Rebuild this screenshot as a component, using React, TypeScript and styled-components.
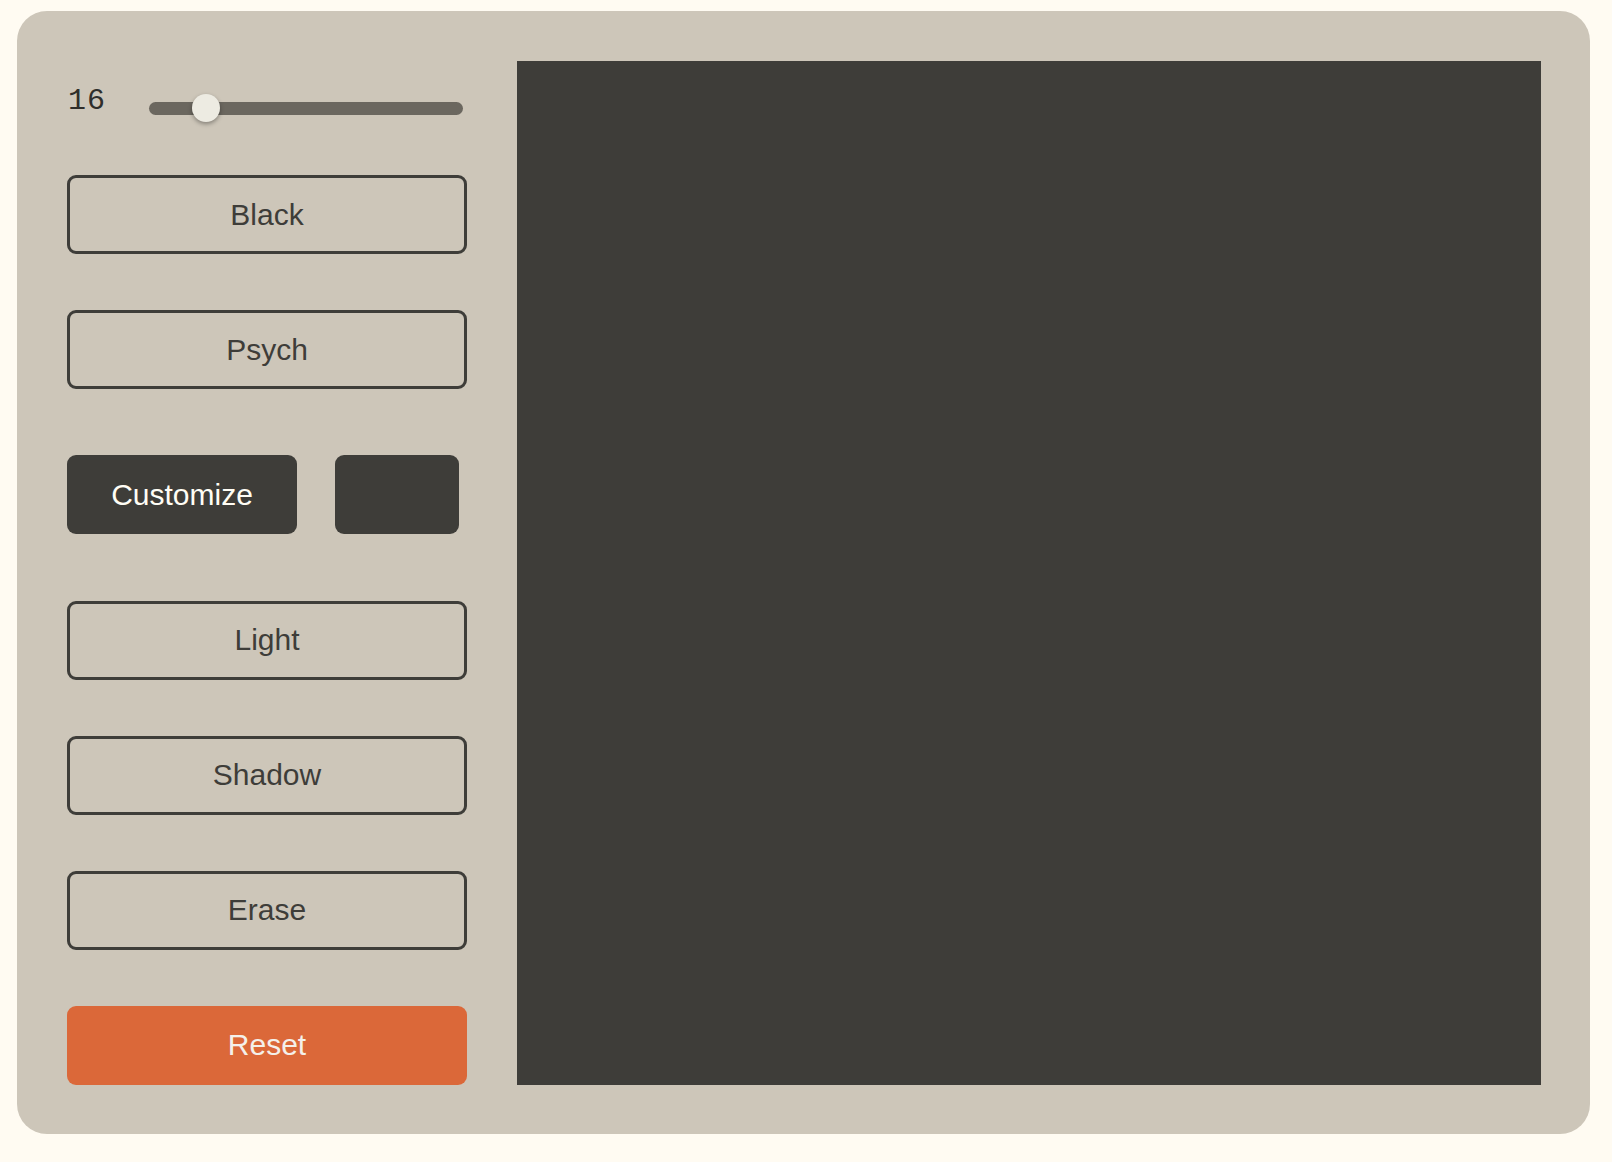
import React, { useState } from "react";
import styled, { createGlobalStyle } from "styled-components";

const GlobalStyle = createGlobalStyle`
  html, body {
    margin: 0;
    padding: 0;
    background: #fffbf2;
  }
  * { box-sizing: border-box; }
`;

const Page = styled.div`
  padding: 11px 0 28px 17px;
  font-family: "Liberation Sans", Arial, Helvetica, sans-serif;
`;

const Card = styled.main`
  width: 1573px;
  display: flex;
  gap: 50px;
  padding: 50px 49px 49px 50px;
  background: #cdc6b9;
  border-radius: 30px;
`;

const Controls = styled.aside`
  width: 400px;
  height: 1024px;
  display: flex;
  flex-direction: column;
  justify-content: space-between;
`;

const SliderRow = styled.div`
  height: 58px;
  display: flex;
  align-items: flex-start;
`;

const SizeLabel = styled.span`
  width: 82px;
  margin-top: 25px;
  padding-left: 1px;
  font-family: "Liberation Mono", "Courier New", monospace;
  font-size: 30px;
  line-height: 1;
  letter-spacing: 1px;
  color: #2f2e2b;
`;

const Range = styled.input`
  -webkit-appearance: none;
  appearance: none;
  width: 314px;
  height: 28px;
  margin: 33px 0 0 0;
  background: transparent;

  &::-webkit-slider-runnable-track {
    height: 13px;
    border-radius: 7px;
    background: #6b675f;
  }
  &::-webkit-slider-thumb {
    -webkit-appearance: none;
    appearance: none;
    width: 28px;
    height: 28px;
    margin-top: -7.5px;
    border-radius: 50%;
    background: #edebe2;
    box-shadow: 0 2px 4px rgba(0, 0, 0, 0.35);
  }
`;

type Variant = "outline" | "dark" | "danger";

const Button = styled.button<{ $variant?: Variant; $width?: number }>`
  width: ${(p) => (p.$width ? `${p.$width}px` : "100%")};
  height: 79px;
  flex: none;
  border-radius: 9px;
  font-family: "Liberation Sans", Arial, Helvetica, sans-serif;
  font-size: 30px;
  cursor: pointer;
  border: ${(p) => (p.$variant === "outline" || !p.$variant ? "3px solid #3e3d39" : "none")};
  background: ${(p) =>
    p.$variant === "dark" ? "#3e3d39" : p.$variant === "danger" ? "#db6839" : "transparent"};
  color: ${(p) =>
    p.$variant === "dark" ? "#fffdf5" : p.$variant === "danger" ? "#f4f0ea" : "#3e3d39"};
`;

const CustomRow = styled.div`
  height: 99px;
  display: flex;
  align-items: center;
  gap: 38px;
`;

const Swatch = styled.div`
  width: 124px;
  height: 79px;
  border-radius: 9px;
  background: #3e3d39;
`;

const Canvas = styled.div`
  width: 1024px;
  height: 1024px;
  flex: none;
  background: #3e3d39;
`;

export default function App() {
  const [size, setSize] = useState(16);
  return (
    <>
      <GlobalStyle />
      <Page>
        <Card>
          <Controls>
            <SliderRow>
              <SizeLabel>{size}</SizeLabel>
              <Range
                type="range"
                min={1}
                max={100}
                value={size}
                onChange={(e) => setSize(Number(e.target.value))}
              />
            </SliderRow>
            <Button>Black</Button>
            <Button>Psych</Button>
            <CustomRow>
              <Button $variant="dark" $width={230}>Customize</Button>
              <Swatch />
            </CustomRow>
            <Button>Light</Button>
            <Button>Shadow</Button>
            <Button>Erase</Button>
            <Button $variant="danger">Reset</Button>
          </Controls>
          <Canvas />
        </Card>
      </Page>
    </>
  );
}
